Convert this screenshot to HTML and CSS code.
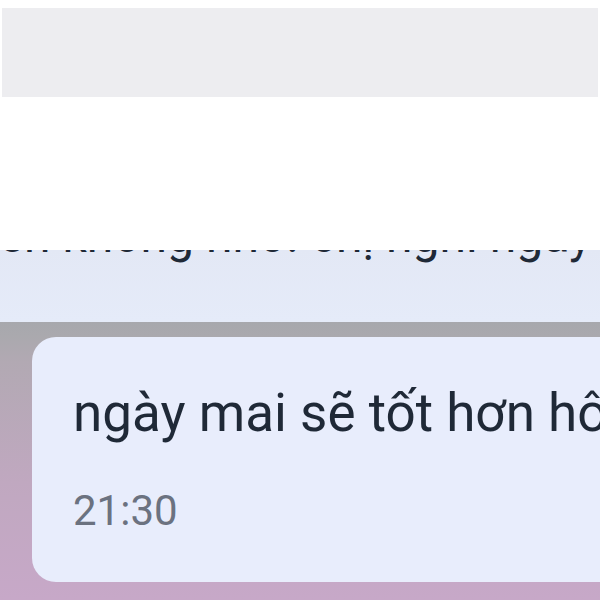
FILE: index.html
```html
<!DOCTYPE html>
<html lang="vi">
<head>
<meta charset="utf-8">
<link rel="stylesheet" href="styles.css">
</head>
<body>
  <div class="topbar"></div>
  <div class="spacer"></div>
  <div class="prev">
    <p class="prev-text">nên không nhớ. chị nghĩ ngày</p>
  </div>
  <div class="chat">
    <div class="bubble">
      <p class="msg">ngày mai sẽ tốt hơn hôm nay</p>
      <p class="time">21:30</p>
    </div>
  </div>
</body>
</html>
```
FILE: styles.css
```css
html, body {
  margin: 0;
  padding: 0;
  background: #ffffff;
  width: 600px;
  height: 600px;
  overflow: hidden;
  font-family: Roboto, "Noto Sans", sans-serif;
}
.topbar {
  margin: 8px 2px 0 2px;
  height: 89px;
  background: #ededf0;
}
.spacer {
  height: 153px;
}
.prev {
  height: 72px;
  overflow: hidden;
  background: linear-gradient(to bottom, #e3e8f5, #e5ebf9);
  white-space: nowrap;
}
.prev-text {
  margin: -42px 0 0 -28px;
  font-size: 48px;
  line-height: 56px;
  color: #1f2937;
}
.chat {
  height: 278px;
  padding-top: 15px;
  box-sizing: border-box;
  background: linear-gradient(to bottom, #a7a8ad 0, #aaa9ae 14px, #b2a9b3 40px, #c0a8c0 160px, #c7a8c8 278px);
  overflow: hidden;
  display: flex;
}
.bubble {
  flex: none;
  margin-left: 32px;
  width: 600px;
  height: 245px;
  box-sizing: border-box;
  padding: 46px 0 0 41px;
  background: #e8edfc;
  border-radius: 24px;
  overflow: hidden;
  white-space: nowrap;
}
.msg {
  margin: 0;
  font-size: 53px;
  line-height: 60px;
  color: #1f2937;
}
.time {
  margin: 44px 0 0 0;
  font-size: 42px;
  line-height: 48px;
  color: #6b7280;
}
```
